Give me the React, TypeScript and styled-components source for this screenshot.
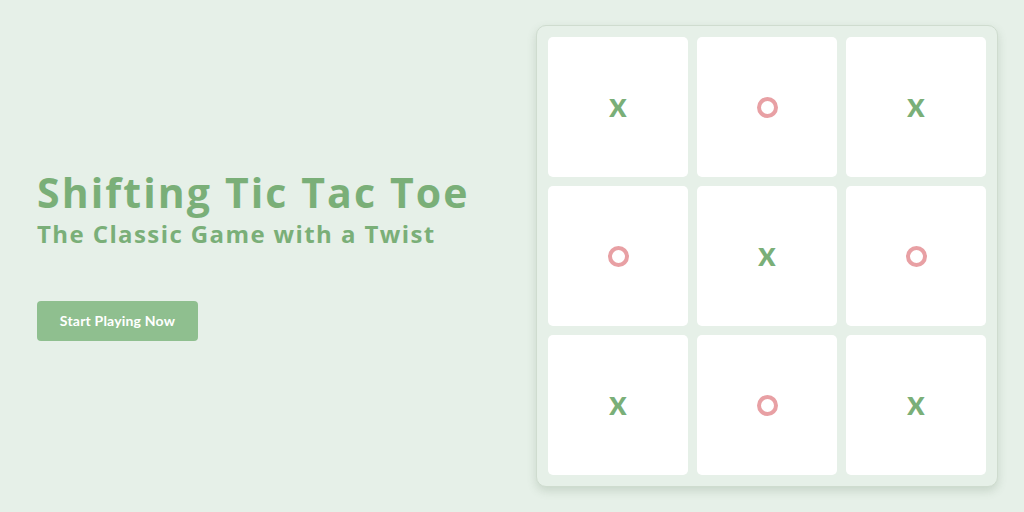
import styled, { createGlobalStyle } from 'styled-components';

const GlobalStyle = createGlobalStyle`
  html, body {
    margin: 0;
    padding: 0;
    background: #e6f0e8;
  }
  body {
    font-family: 'Open Sans', 'Noto Sans', sans-serif;
  }
`;

const Page = styled.main`
  width: 1024px;
  height: 512px;
  box-sizing: border-box;
  padding: 0 26px 0 37px;
  display: flex;
  align-items: center;
  justify-content: space-between;
`;

const Intro = styled.section`
  display: flex;
  flex-direction: column;
  align-items: flex-start;
  margin-bottom: 3px;
`;

const Title = styled.h1`
  margin: 0;
  font-size: 41px;
  line-height: 46px;
  font-weight: 700;
  letter-spacing: 2.1px;
  color: #7aaf78;
`;

const Subtitle = styled.h2`
  margin: 4px 0 0;
  font-size: 24px;
  line-height: 30px;
  font-weight: 700;
  letter-spacing: 1.4px;
  color: #7aaf78;
`;

const StartButton = styled.button`
  margin-top: 52px;
  width: 161px;
  height: 40px;
  border: none;
  border-radius: 4px;
  background: #8fbf8f;
  color: #ffffff;
  font-family: 'Lato', sans-serif;
  font-size: 14px;
  font-weight: 700;
  letter-spacing: 0.2px;
  cursor: pointer;
`;

const Board = styled.div`
  display: grid;
  grid-template-columns: repeat(3, 140px);
  grid-template-rows: repeat(3, 140px);
  gap: 9px;
  padding: 11px;
  background: #e6f0e8;
  border: 1px solid #cfdccf;
  border-radius: 10px;
  box-shadow: 0 4px 10px rgba(80, 110, 80, 0.2);
`;

const Cell = styled.div<{ $mark: 'X' | 'O' }>`
  background: #ffffff;
  border-radius: 5px;
  display: flex;
  align-items: center;
  justify-content: center;
  font-family: 'Lato', sans-serif;
  font-size: 25px;
  font-weight: 800;
  color: ${(p) => (p.$mark === 'X' ? '#7aaf78' : '#e8a0a4')};
`;

const Ring = styled.span`
  width: 13px;
  height: 13px;
  border: 4px solid #e8a0a4;
  border-radius: 50%;
`;

const marks: ('X' | 'O')[] = ['X', 'O', 'X', 'O', 'X', 'O', 'X', 'O', 'X'];

const App = () => {
  return (
    <>
      <GlobalStyle />
      <Page>
        <Intro>
          <Title>Shifting Tic Tac Toe</Title>
          <Subtitle>The Classic Game with a Twist</Subtitle>
          <StartButton>Start Playing Now</StartButton>
        </Intro>
        <Board>
          {marks.map((m, i) => (
            <Cell key={i} $mark={m}>
              {m === 'X' ? 'X' : <Ring aria-label="O" />}
            </Cell>
          ))}
        </Board>
      </Page>
    </>
  );
};

export default App;
